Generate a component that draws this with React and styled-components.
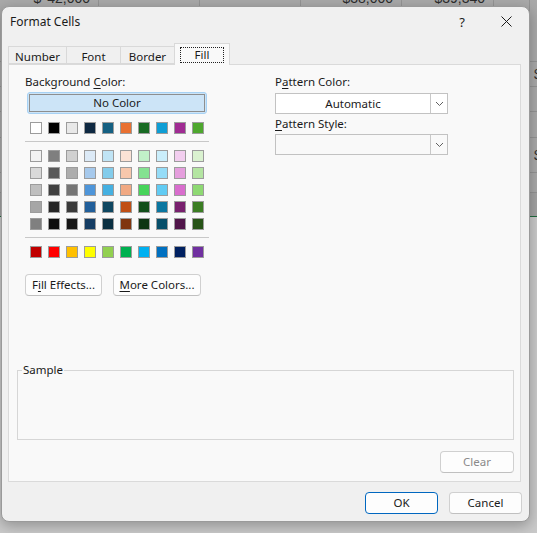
import React from "react";
import styled, { createGlobalStyle } from "styled-components";

const Global = createGlobalStyle`
  html, body { margin: 0; padding: 0; }
  body { width: 537px; height: 533px; overflow: hidden; background: #cacaca; }
  #root { width: 537px; height: 533px; }
`;

const Page = styled.div`
  position: relative;
  width: 537px;
  height: 533px;
  overflow: hidden;
  font-family: "Noto Sans", "Liberation Sans", sans-serif;
`;

/* ---------- background spreadsheet (dimmed) ---------- */
const Sheet = styled.div`
  display: flex;
  flex-direction: column;
  width: 537px;
  height: 533px;
  background: #cacaca;
`;
const SheetRow = styled.div`
  display: flex;
  height: ${(p) => p.$h}px;
  flex: none;
  overflow: hidden;
  background: ${(p) => p.$bg || "#a9a9a9"};
  border-bottom: ${(p) => (p.$line ? `1px solid ${p.$line}` : "none")};
  box-sizing: border-box;
`;
const SheetCell = styled.div`
  flex: none;
  width: ${(p) => p.$w}px;
  border-right: 1px solid #949494;
  box-sizing: border-box;
  display: flex;
  align-items: ${(p) => p.$align || "center"};
  justify-content: ${(p) => (p.$left ? "flex-start" : "flex-end")};
  gap: 6px;
  padding: 0 8px 0 4px;
  font-family: "Liberation Sans", sans-serif;
  font-size: 14px;
  line-height: 16px;
  color: #2c2c2c;
  overflow: hidden;
  white-space: nowrap;
`;

/* ---------- dialog ---------- */
const Dialog = styled.div`
  position: absolute;
  left: 1px;
  top: 6px;
  width: 529px;
  height: 516px;
  box-sizing: border-box;
  border: 1px solid #9a9a9a;
  border-radius: 8px;
  background: #f0f0f0;
  box-shadow: 0 4px 14px rgba(0, 0, 0, 0.28);
  display: flex;
  flex-direction: column;
  font-size: 11.5px;
  color: #1a1a1a;
`;
const TitleBar = styled.div`
  height: 29px;
  flex: none;
  display: flex;
  align-items: center;
  padding-left: 8px;
`;
const Title = styled.div`
  flex: 1;
  font-size: 12px;
`;
const TitleBtn = styled.div`
  width: ${(p) => p.$w || 20}px;
  margin-right: ${(p) => p.$mr || 0}px;
  display: flex;
  justify-content: center;
  align-items: center;
  font-size: 13px;
`;
const Tabs = styled.div`
  margin-top: 7px;
  height: 21px;
  flex: none;
  display: flex;
  align-items: flex-end;
  padding-left: 6px;
  position: relative;
  z-index: 2;
`;
const Tab = styled.div`
  width: ${(p) => p.$w}px;
  height: ${(p) => (p.$active ? 22 : 18)}px;
  margin-bottom: ${(p) => (p.$active ? -1 : 0)}px;
  margin-right: -1px;
  box-sizing: border-box;
  border: 1px solid #d9d9d9;
  border-bottom: ${(p) => (p.$active ? "none" : "1px solid #d9d9d9")};
  background: ${(p) => (p.$active ? "#f9f9f9" : "#f0f0f0")};
  display: flex;
  align-items: center;
  justify-content: center;
  padding-top: ${(p) => (p.$active ? 0 : 2)}px;
  position: relative;
`;
const FocusText = styled.span`
  border: 1px dotted #222;
  padding: 0 14px;
  line-height: 14px;
`;
const Panel = styled.div`
  flex: 1;
  margin: 0 8px 0 6px;
  border: 1px solid #dadada;
  background: #f9f9f9;
  display: flex;
  flex-direction: column;
  padding: 9px 6px 8px 8px;
  position: relative;
  z-index: 1;
`;
const Top = styled.div`
  display: flex;
  gap: 66px;
  padding-left: 8px;
`;
const LeftCol = styled.div`
  width: 184px;
  display: flex;
  flex-direction: column;
`;
const RightCol = styled.div`
  width: 173px;
  display: flex;
  flex-direction: column;
`;
const Label = styled.div`
  line-height: 16px;
  height: 16px;
  margin-top: ${(p) => p.$mt || 0}px;
  white-space: nowrap;
`;
const NoColor = styled.div`
  margin: 2px 2px 0 2px;
  height: 22px;
  box-sizing: border-box;
  border: 1px solid #a6d1f4;
  border-radius: 3px;
  background: #cce4f7;
  padding: 1px;
  display: flex;
`;
const NoColorInner = styled.div`
  flex: 1;
  border: 1px solid #8e8e8e;
  display: flex;
  align-items: center;
  justify-content: center;
  line-height: 14px;
`;
const SwatchRow = styled.div`
  display: flex;
  gap: 6px;
  padding-left: 5px;
  margin-top: ${(p) => p.$mt || 0}px;
`;
const SwatchGrid = styled.div`
  display: flex;
  flex-direction: column;
  gap: 5px;
  margin-top: 8px;
`;
const Swatch = styled.div`
  width: 12px;
  height: 12px;
  box-sizing: border-box;
  border: 1px solid #9c9c9c;
  background: ${(p) => p.$c};
`;
const Sep = styled.div`
  height: 1px;
  background: #c8c8c8;
  margin-top: 7px;
`;
const BtnRow = styled.div`
  display: flex;
  gap: 11px;
  margin-top: 16px;
`;
const Button = styled.div`
  width: ${(p) => p.$w}px;
  height: 22px;
  box-sizing: border-box;
  border: 1px solid ${(p) => (p.$primary ? "#0067c0" : "#d0d0d0")};
  border-bottom-color: ${(p) => (p.$primary ? "#0067c0" : "#c0c0c0")};
  border-radius: 4px;
  background: #fdfdfd;
  display: flex;
  align-items: center;
  justify-content: center;
  color: ${(p) => (p.$disabled ? "#8a8a8a" : "#1a1a1a")};
  white-space: nowrap;
  line-height: 14px;
`;
const Select = styled.div`
  margin-top: ${(p) => p.$mt || 0}px;
  height: 21px;
  box-sizing: border-box;
  border: 1px solid #c2c2c2;
  background: ${(p) => (p.$disabled ? "#f9f9f9" : "#ffffff")};
  display: flex;
`;
const SelectValue = styled.div`
  flex: 1;
  display: flex;
  align-items: center;
  justify-content: center;
  line-height: 14px;
`;
const Arrow = styled.div`
  width: 16px;
  border-left: 1px solid #c8c8c8;
  display: flex;
  align-items: center;
  justify-content: center;
`;
const Sample = styled.fieldset`
  margin: auto 0 0 0;
  padding: 0;
  height: 77px;
  box-sizing: border-box;
  border: 1px solid #d6d6d6;
  min-width: 0;
`;
const Legend = styled.legend`
  padding: 0 1px;
  margin-left: 4px;
  line-height: 14px;
  font-size: 11.5px;
`;
const ClearRow = styled.div`
  display: flex;
  justify-content: flex-end;
  margin-top: 11px;
`;
const Footer = styled.div`
  height: 39px;
  flex: none;
  box-sizing: border-box;
  padding: 10px 7px 0 0;
  display: flex;
  justify-content: flex-end;
  gap: 11px;
`;
const U = styled.span`
  text-decoration: underline;
  text-underline-offset: 2px;
`;

const theme = ["#FFFFFF", "#000000", "#E8E8E8", "#0E2841", "#156082", "#E97132", "#196B24", "#0F9ED5", "#A02B93", "#4EA72E"];
const shades = [
  ["#F2F2F2", "#7F7F7F", "#D0D0D0", "#DCEAF7", "#C0E4F5", "#FBE2D5", "#C1F0C8", "#CAEEFB", "#F2CEEF", "#DAF2D0"],
  ["#D9D9D9", "#595959", "#ADADAD", "#A6C9EC", "#83CCEB", "#F7C7AC", "#84E291", "#95DCF7", "#E59EDD", "#B4E5A2"],
  ["#BFBFBF", "#404040", "#757575", "#4E95D9", "#45B0E1", "#F1A983", "#47D45A", "#61CBF3", "#D86DCD", "#8ED973"],
  ["#A6A6A6", "#262626", "#3A3A3A", "#215F9A", "#0F4761", "#C04F15", "#124F1A", "#0B76A0", "#78206E", "#3B7D23"],
  ["#808080", "#0D0D0D", "#161616", "#153D64", "#0A2F41", "#80350E", "#0D3512", "#074F6A", "#501549", "#275317"],
];
const standard = ["#C00000", "#FF0000", "#FFC000", "#FFFF00", "#92D050", "#00B050", "#00B0F0", "#0070C0", "#002060", "#7030A0"];

const colWidths = [99, 101, 101, 101, 92, 36, 40];
const sheetRows = [
  { h: 6, align: "flex-end", vals: [["$", "42,000"], null, null, ["$38,000"], ["$39,340"], null, null], line: null },
  { h: 56, vals: [], line: "#949494" },
  { h: 25, vals: [null, null, null, null, null, null, ["$"]], line: "#949494" },
  { h: 25, vals: [], line: "#949494" },
  { h: 26, vals: [], line: "#949494" },
  { h: 35, vals: [null, null, null, null, null, null, ["$"]], line: "#949494" },
  { h: 20, vals: [], line: "#949494" },
  { h: 24, vals: [], line: "#1f6b3d", bg: "#a3a3a3" },
];

const Chevron = () => (
  <svg width="9" height="6" viewBox="0 0 9 6">
    <path d="M1 1 L4.5 4.5 L8 1" fill="none" stroke="#606060" strokeWidth="1" />
  </svg>
);

const Close = () => (
  <svg width="11" height="11" viewBox="0 0 11 11">
    <path d="M0.5 0.5 L10.5 10.5 M10.5 0.5 L0.5 10.5" stroke="#1a1a1a" strokeWidth="1" />
  </svg>
);

export default function App() {
  return (
    <Page>
      <Global />
      <Sheet>
        {sheetRows.map((r, i) => (
          <SheetRow key={i} $h={r.h} $line={r.line} $bg={r.bg}>
            {colWidths.map((w, j) => {
              const v = r.vals[j];
              return (
                <SheetCell key={j} $w={w} $align={r.align} $left={j === 6}>
                  {v ? v.map((t, k) => <span key={k}>{t}</span>) : null}
                </SheetCell>
              );
            })}
          </SheetRow>
        ))}
      </Sheet>
      <Dialog>
        <TitleBar>
          <Title>Format Cells</Title>
          <TitleBtn $w={20} $mr={11}>?</TitleBtn>
          <TitleBtn $w={46}>
            <Close />
          </TitleBtn>
        </TitleBar>
        <Tabs>
          <Tab $w={59}>Number</Tab>
          <Tab $w={55}>Font</Tab>
          <Tab $w={55}>Border</Tab>
          <Tab $w={56} $active>
            <FocusText>Fill</FocusText>
          </Tab>
        </Tabs>
        <Panel>
          <Top>
            <LeftCol>
              <Label>
                Background <U>C</U>olor:
              </Label>
              <NoColor>
                <NoColorInner>No Color</NoColorInner>
              </NoColor>
              <SwatchRow $mt={8}>
                {theme.map((c) => (
                  <Swatch key={c} $c={c} />
                ))}
              </SwatchRow>
              <Sep />
              <SwatchGrid>
                {shades.map((row, i) => (
                  <SwatchRow key={i}>
                    {row.map((c, j) => (
                      <Swatch key={j} $c={c} />
                    ))}
                  </SwatchRow>
                ))}
              </SwatchGrid>
              <Sep />
              <SwatchRow $mt={8}>
                {standard.map((c) => (
                  <Swatch key={c} $c={c} />
                ))}
              </SwatchRow>
              <BtnRow>
                <Button $w={77}>
                  F<U>i</U>ll Effects...
                </Button>
                <Button $w={88}>
                  <U>M</U>ore Colors...
                </Button>
              </BtnRow>
            </LeftCol>
            <RightCol>
              <Label>
                P<U>a</U>ttern Color:
              </Label>
              <Select $mt={3}>
                <SelectValue>Automatic</SelectValue>
                <Arrow>
                  <Chevron />
                </Arrow>
              </Select>
              <Label $mt={2}>
                <U>P</U>attern Style:
              </Label>
              <Select $mt={2} $disabled>
                <SelectValue />
                <Arrow>
                  <Chevron />
                </Arrow>
              </Select>
            </RightCol>
          </Top>
          <Sample>
            <Legend>Sample</Legend>
          </Sample>
          <ClearRow>
            <Button $w={74} $disabled>
              Clear
            </Button>
          </ClearRow>
        </Panel>
        <Footer>
          <Button $w={73} $primary>
            OK
          </Button>
          <Button $w={73}>Cancel</Button>
        </Footer>
      </Dialog>
    </Page>
  );
}
